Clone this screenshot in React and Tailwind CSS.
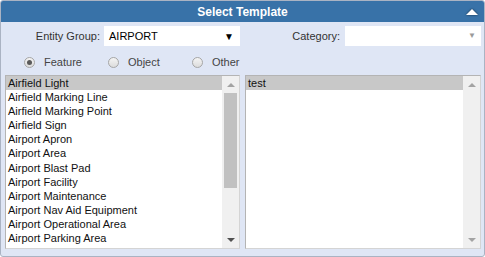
import { useState } from 'react';

const FEATURES = [
  'Airfield Light',
  'Airfield Marking Line',
  'Airfield Marking Point',
  'Airfield Sign',
  'Airport Apron',
  'Airport Area',
  'Airport Blast Pad',
  'Airport Facility',
  'Airport Maintenance',
  'Airport Nav Aid Equipment',
  'Airport Operational Area',
  'Airport Parking Area',
  'Airport Parking Hold',
  'Airport Runway',
];

const TEMPLATES = ['test'];

function Radio({ label, checked, onClick }) {
  return (
    <button type="button" onClick={onClick} className="flex w-[84px] items-center gap-[9px] text-left">
      <span className="flex h-[11px] w-[11px] items-center justify-center rounded-full border border-[#a6a6a6] bg-gradient-to-b from-[#f4f4f4] to-[#dcdcdc]">
        {checked && <span className="h-[5px] w-[5px] rounded-full bg-[#5a5a5a]" />}
      </span>
      <span className="text-[11px] text-[#444]">{label}</span>
    </button>
  );
}

function Scrollbar({ thumb }) {
  return (
    <div className="flex w-[17px] shrink-0 flex-col bg-[#f0f0f0]">
      <div className="flex h-[17px] items-center justify-center">
        <span className="h-0 w-0 border-x-[4px] border-b-[4px] border-x-transparent border-b-[#a3a3a3]" />
      </div>
      <div className="flex-1 px-[2px]">
        {thumb && <div className="h-[95px] bg-[#c1c1c1]" />}
      </div>
      <div className="flex h-[17px] items-center justify-center">
        <span
          className={`h-0 w-0 border-x-[4px] border-t-[4px] border-x-transparent ${
            thumb ? 'border-t-[#505050]' : 'border-t-[#a3a3a3]'
          }`}
        />
      </div>
    </div>
  );
}

function ListBox({ items, selected, onSelect, thumb, width }) {
  return (
    <div className={`flex h-[174px] shrink-0 border border-[#b4b4b4] border-r-[#d4d4d4] border-b-[#d4d4d4] bg-white ${width}`}>
      <div className="min-w-0 flex-1 overflow-hidden">
        {items.map((item) => (
          <div
            key={item}
            onClick={() => onSelect(item)}
            className={`h-[14.1px] cursor-default whitespace-nowrap pl-[2px] text-[11px] leading-[14.1px] text-[#111] ${
              item === selected ? 'bg-[#c8c8c8]' : ''
            }`}
          >
            {item}
          </div>
        ))}
      </div>
      <Scrollbar thumb={thumb} />
    </div>
  );
}

function App() {
  const [kind, setKind] = useState('Feature');
  const [feature, setFeature] = useState('Airfield Light');
  const [template, setTemplate] = useState('test');

  return (
    <div
      className="flex h-[257px] w-[485px] flex-col overflow-hidden rounded-[3px] border border-[#aab3c3] bg-[#dfe6f5]"
      style={{ fontFamily: '"Liberation Sans", Arial, sans-serif' }}
    >
      <div className="flex h-[21px] shrink-0 items-center bg-[#3872a8] text-white">
        <div className="w-[24px]" />
        <p className="flex-1 text-center text-[12px] font-bold">Select Template</p>
        <div className="flex w-[24px] items-center justify-center">
          <span className="h-0 w-0 border-x-[6px] border-b-[6px] border-x-transparent border-b-white drop-shadow-[0_0_1px_rgba(0,0,0,0.6)]" />
        </div>
      </div>

      <div className="mt-[4px] flex h-[20px] shrink-0 items-center">
        <div className="flex w-[239px] items-center justify-end gap-[4px]">
          <span className="text-[11px] text-[#333]">Entity Group:</span>
          <div className="flex h-[20px] w-[136px] items-center justify-between bg-white pl-[5px] pr-[6px]">
            <span className="text-[11px] text-black">AIRPORT</span>
            <span className="text-[10px] text-black">▼</span>
          </div>
        </div>
        <div className="ml-[5px] flex w-[236px] items-center justify-end gap-[5px]">
          <span className="text-[11px] text-[#333]">Category:</span>
          <div className="flex h-[20px] w-[136px] items-center justify-end bg-white pr-[5px]">
            <span className="text-[8px] text-[#9a9a9a]">▼</span>
          </div>
        </div>
      </div>

      <div className="mt-[8px] flex h-[16px] shrink-0 items-center pl-[23px]">
        {['Feature', 'Object', 'Other'].map((k) => (
          <Radio key={k} label={k} checked={kind === k} onClick={() => setKind(k)} />
        ))}
      </div>

      <div className="mt-[5px] flex gap-[5px] pl-[4px]">
        <ListBox items={FEATURES} selected={feature} onSelect={setFeature} thumb width="w-[235px]" />
        <ListBox items={TEMPLATES} selected={template} onSelect={setTemplate} width="w-[236px]" />
      </div>
    </div>
  );
}

export default App;
